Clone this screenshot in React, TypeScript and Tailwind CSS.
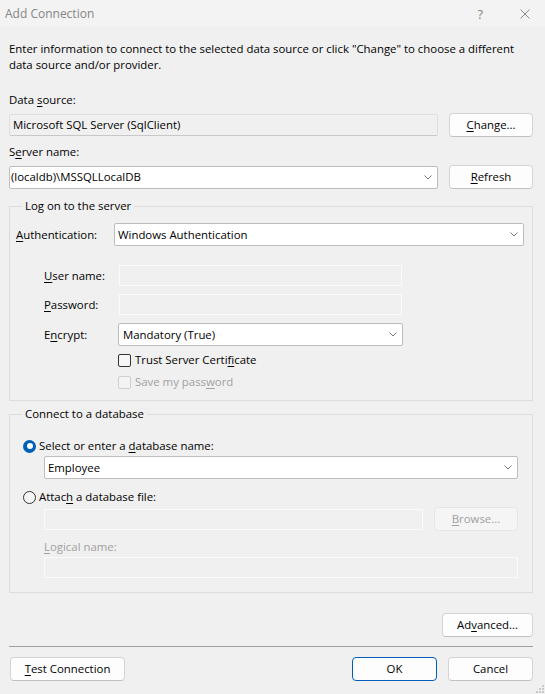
import React from "react";

const U = ({ children }: { children: React.ReactNode }) => (
    <span className="underline underline-offset-[2px] decoration-1">{children}</span>
);

function Chevron() {
    return (
        <svg width="8" height="5" viewBox="0 0 8 5" className="ml-auto mr-[5px] shrink-0">
            <path d="M0.5 0.5 L4 4 L7.5 0.5" fill="none" stroke="#7a7a7a" strokeWidth="1" />
        </svg>
    );
}

function Combo({ value, className = "", pad = "pl-[3px]" }: { value: string; className?: string; pad?: string }) {
    return (
        <div className={`flex items-center h-[23px] bg-white border border-[#bdbdbd] rounded-[2px] ${pad} ${className}`}>
            <span>{value}</span>
            <Chevron />
        </div>
    );
}

function Btn({
    children,
    className = "",
    disabled,
    primary,
}: {
    children: React.ReactNode;
    className?: string;
    disabled?: boolean;
    primary?: boolean;
}) {
    const tone = disabled
        ? "bg-[#f5f5f5] border-[#e5e5e5] text-[#a0a0a0]"
        : primary
        ? "bg-[#fdfdfd] border-[#005fb8] text-black"
        : "bg-[#fdfdfd] border-[#d4d4d4] border-b-[#c2c2c2] text-black";
    return (
        <div className={`flex items-center justify-center h-[24px] rounded-[4px] border shrink-0 ${tone} ${className}`}>
            {children}
        </div>
    );
}

function DisabledBox({ className = "" }: { className?: string }) {
    return <div className={`h-[21px] bg-[#f0f0f0] border border-[#fbfbfb] ${className}`} />;
}

function Checkbox({ disabled }: { disabled?: boolean }) {
    return (
        <span
            className={`w-[13px] h-[13px] rounded-[2px] border shrink-0 ${
                disabled ? "border-[#cfcfcf] bg-[#f3f3f3]" : "border-[#333] bg-[#f6f6f6]"
            }`}
        />
    );
}

function Radio({ checked }: { checked?: boolean }) {
    if (checked) {
        return (
            <span className="w-[13px] h-[13px] rounded-full bg-[#005fb8] flex items-center justify-center shrink-0">
                <span className="w-[6px] h-[6px] rounded-full bg-white" />
            </span>
        );
    }
    return <span className="w-[13px] h-[13px] rounded-full border border-[#333] bg-[#f6f6f6] shrink-0" />;
}

export default function App() {
    return (
        <div
            className="relative w-[545px] h-[694px] bg-[#f0f0f0] text-black text-[11.4px] leading-[16px] overflow-hidden flex flex-col"
            style={{ fontFamily: '"Open Sans", "Noto Sans", sans-serif' }}
        >
            {/* title bar */}
            <div className="h-[27px] bg-[#f3f3f3] flex items-center pl-[5px] pr-[15px] text-[#858585] shrink-0">
                <span className="text-[12px]">Add Connection</span>
                <span className="ml-auto text-[13px]">?</span>
                <svg width="10" height="10" viewBox="0 0 10 10" className="ml-[37px]">
                    <path d="M0.5 0.5 L9.5 9.5 M9.5 0.5 L0.5 9.5" stroke="#8a8a8a" strokeWidth="1" />
                </svg>
            </div>

            <div className="flex flex-col pl-[9px] pr-[12px]">
                <p className="mt-[14px]">
                    Enter information to connect to the selected data source or click "Change" to choose a different
                    <br />
                    data source and/or provider.
                </p>

                <div className="mt-[19px]">
                    Data <U>s</U>ource:
                </div>
                <div className="mt-[5px] flex items-center h-[24px]">
                    <div className="flex-1 h-[22px] flex items-center pl-[3px] bg-[#f0f0f0] border border-[#dedede] border-b-[#c8c8c8] rounded-[2px]">
                        Microsoft SQL Server (SqlClient)
                    </div>
                    <Btn className="w-[84px] ml-[11px]">
                        <U>C</U>hange...
                    </Btn>
                </div>

                <div className="mt-[7px]">
                    S<U>e</U>rver name:
                </div>
                <div className="mt-[5px] flex items-center h-[24px]">
                    <Combo value="(localdb)\MSSQLLocalDB" className="flex-1" pad="pl-[1px]" />
                    <Btn className="w-[84px] ml-[11px]">
                        <U>R</U>efresh
                    </Btn>
                </div>

                {/* Log on to the server */}
                <fieldset className="mt-[9px] border border-[#dcdcdc] pl-[6px] pr-[8px] pb-[10px]">
                    <legend className="ml-[6px] px-[3px]">Log on to the server</legend>
                    <div className="mt-[9px] flex items-center">
                        <div className="w-[98px] shrink-0">
                            <U>A</U>uthentication:
                        </div>
                        <Combo value="Windows Authentication" className="flex-1" />
                    </div>

                    <div className="mt-[19px] flex items-center">
                        <div className="ml-[28px] w-[75px] shrink-0">
                            <U>U</U>ser name:
                        </div>
                        <DisabledBox className="w-[283px]" />
                    </div>
                    <div className="mt-[8px] flex items-center">
                        <div className="ml-[28px] w-[75px] shrink-0">
                            <U>P</U>assword:
                        </div>
                        <DisabledBox className="w-[283px]" />
                    </div>
                    <div className="mt-[8px] flex items-center">
                        <div className="ml-[28px] w-[74px] shrink-0">
                            E<U>n</U>crypt:
                        </div>
                        <Combo value="Mandatory (True)" className="w-[285px] h-[22px]" pad="pl-[4px]" />
                    </div>
                    <div className="mt-[6px] ml-[102px] flex items-center gap-[4px]">
                        <Checkbox />
                        <span>
                            Trust Server Certi<U>f</U>icate
                        </span>
                    </div>
                    <div className="mt-[6px] ml-[102px] flex items-center gap-[4px] text-[#a0a0a0]">
                        <Checkbox disabled />
                        <span>
                            Save my pass<U>w</U>ord
                        </span>
                    </div>
                </fieldset>

                {/* Connect to a database */}
                <fieldset className="mt-[5px] border border-[#dcdcdc] pl-[6px] pr-[14px] pb-[14px]">
                    <legend className="ml-[6px] px-[3px]">Connect to a database</legend>
                    <div className="mt-[16px] ml-[7px] flex items-center gap-[3px]">
                        <Radio checked />
                        <span>
                            Select or enter a <U>d</U>atabase name:
                        </span>
                    </div>
                    <Combo value="Employee" className="mt-[2px] ml-[28px] h-[23px]" />
                    <div className="mt-[10px] ml-[7px] flex items-center gap-[3px]">
                        <Radio />
                        <span>
                            Attac<U>h</U> a database file:
                        </span>
                    </div>
                    <div className="mt-[2px] ml-[28px] flex items-center h-[24px]">
                        <DisabledBox className="flex-1" />
                        <Btn disabled className="w-[84px] ml-[11px]">
                            <U>B</U>rowse...
                        </Btn>
                    </div>
                    <div className="mt-[8px] ml-[28px] text-[#a0a0a0]">
                        <U>L</U>ogical name:
                    </div>
                    <DisabledBox className="mt-[2px] ml-[28px] h-[21px]" />
                </fieldset>

                <div className="mt-[20px] flex justify-end">
                    <Btn className="w-[91px]">
                        Ad<U>v</U>anced...
                    </Btn>
                </div>

                <div className="mt-[9px] border-t border-[#a0a0a0]" />

                <div className="mt-[10px] flex items-center">
                    <Btn className="w-[115px] ml-[1px]">
                        <U>T</U>est Connection
                    </Btn>
                    <Btn primary className="w-[85px] ml-auto">
                        OK
                    </Btn>
                    <Btn className="w-[85px] ml-[11px]">Cancel</Btn>
                </div>
            </div>

            {/* size grip */}
            <svg width="8" height="8" viewBox="0 0 8 8" className="absolute right-[1px] bottom-[1px]">
                <rect x="6" y="0" width="2" height="2" fill="#c8c8c8" />
                <rect x="3" y="3" width="2" height="2" fill="#c8c8c8" />
                <rect x="6" y="3" width="2" height="2" fill="#c8c8c8" />
                <rect x="0" y="6" width="2" height="2" fill="#c8c8c8" />
                <rect x="3" y="6" width="2" height="2" fill="#c8c8c8" />
                <rect x="6" y="6" width="2" height="2" fill="#c8c8c8" />
            </svg>
        </div>
    );
}
